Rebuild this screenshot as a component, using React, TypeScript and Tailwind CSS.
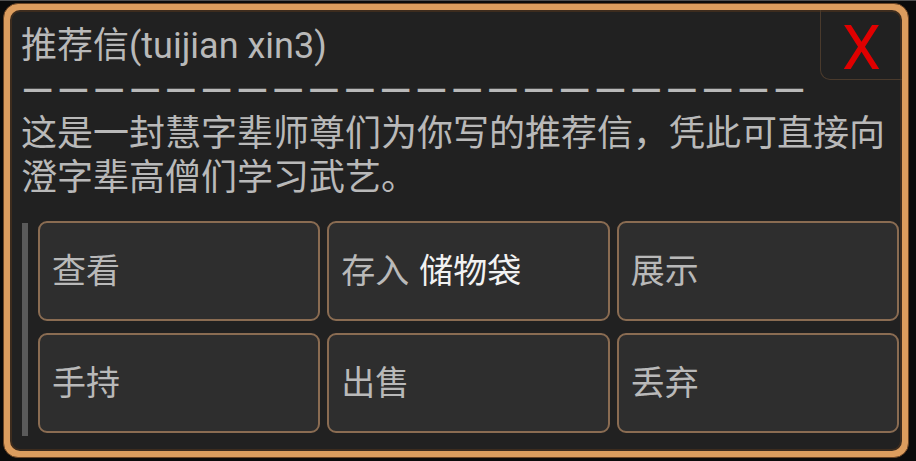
const ACTIONS: { label: string; extra?: string }[] = [
  { label: "查看" },
  { label: "存入", extra: "储物袋" },
  { label: "展示" },
  { label: "手持" },
  { label: "出售" },
  { label: "丢弃" },
];

function ActionButton({ label, extra }: { label: string; extra?: string }) {
  return (
    <button
      type="button"
      className="flex h-[100px] items-center rounded-[9px] border-2 border-[#8a6c52] bg-[#2e2e2e] pl-[12px] text-left text-[34px] leading-none text-[#b9b9b9]"
    >
      {label}
      {extra && <span className="ml-[10px] text-[#f2f2f2]">{extra}</span>}
    </button>
  );
}

export default function App() {
  return (
    <div className="h-[461px] w-[916px] overflow-hidden border-t border-[#505050] bg-[#0b0b0b] pl-[3px] pt-[2px] font-['Roboto','Noto_Sans_CJK_SC',sans-serif]">
      <div className="h-[455px] w-[906px] rounded-[15px] border border-[#6a4424] bg-[#dc9d5e] p-[6px]">
        <div className="flex h-full flex-col rounded-[10px] border-2 border-[#3d2c1e] bg-[#212121]">
          {/* header */}
          <div className="flex h-[68px] items-start justify-between">
            <h3 className="pl-[9px] pt-[12px] text-[36px] leading-[44px] text-[#b9b9b9]">推荐信(tuijian xin3)</h3>
            <button
              type="button"
              aria-label="关闭"
              className="-mr-[2px] -mt-[2px] flex h-[70px] w-[82px] items-center justify-center rounded-bl-[10px] border-b border-l border-[#4a3a2c] pt-[6px] font-['Roboto',sans-serif] text-[62px] leading-none text-[#e00000]"
            >
              X
            </button>
          </div>

          <div className="-mt-[8px] whitespace-nowrap pl-[9px] text-[42px] leading-[40px] tracking-[3px] text-[#b9b9b9]">
            ——————————————————————
          </div>

          <p className="pl-[9px] text-[36px] leading-[44px] text-[#b9b9b9]">
            这是一封慧字辈师尊们为你写的推荐信，凭此可直接向
            <br />
            澄字辈高僧们学习武艺。
          </p>

          {/* actions */}
          <div className="mt-[21px] flex pl-[10px] pr-[1px]">
            <div className="-mb-[3px] mr-[10px] mt-[2px] w-[6px] self-stretch bg-[#5a5a5a]" />
            <div className="grid flex-1 grid-cols-3 gap-x-[7px] gap-y-[12px]">
              {ACTIONS.map((a) => (
                <ActionButton key={a.label} label={a.label} extra={a.extra} />
              ))}
            </div>
          </div>
        </div>
      </div>
    </div>
  );
}
